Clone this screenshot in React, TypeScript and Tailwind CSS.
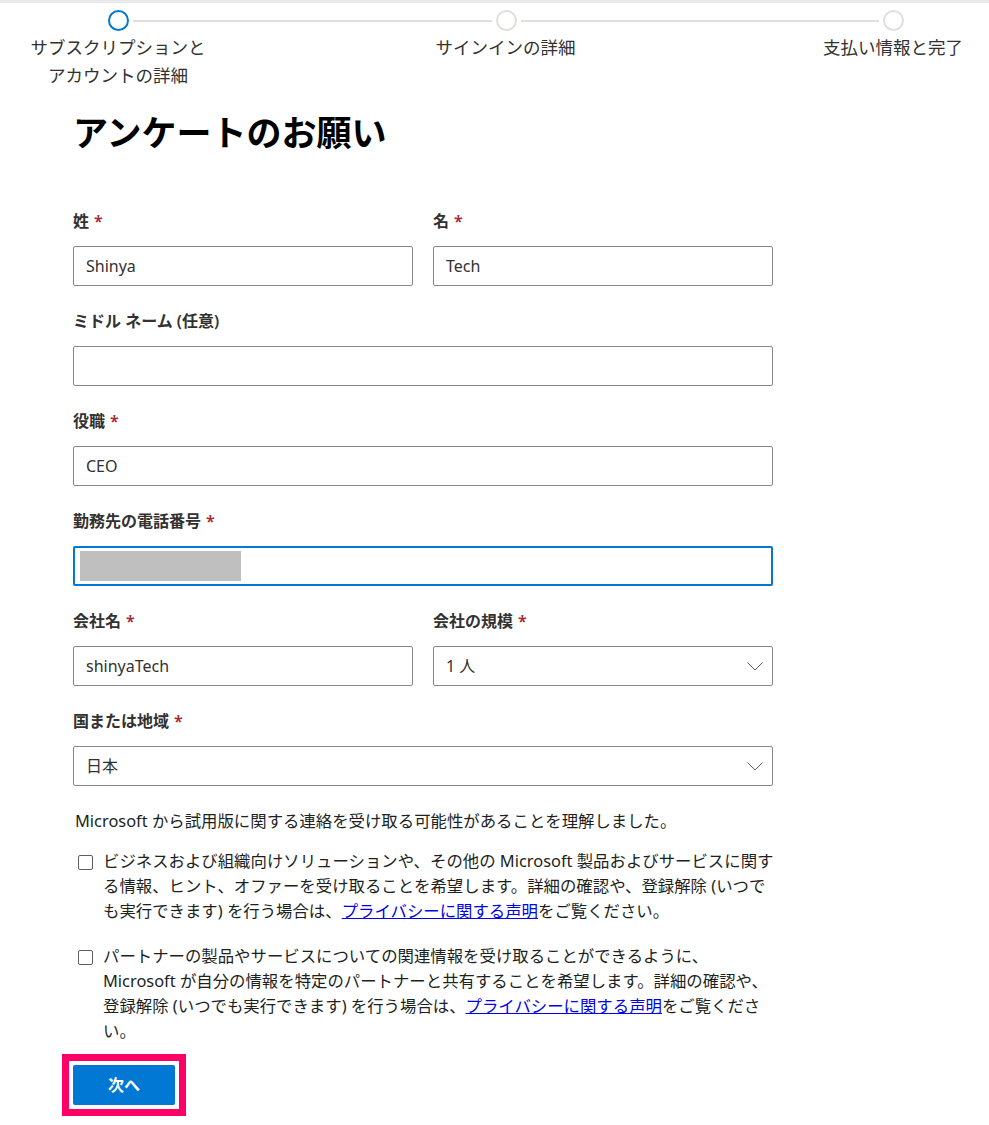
import React from "react";

const FONT = { fontFamily: '"Noto Sans", "Noto Sans CJK JP", sans-serif' };

function Label({ text, required = true }: { text: string; required?: boolean }) {
  return (
    <div className="h-[24px] leading-[24px] text-[16px] font-semibold text-[#323130] mb-[13px] whitespace-nowrap">
      {text}
      {required && <span className="text-[#a4262c] ml-[5px]">*</span>}
    </div>
  );
}

function TextInput({ value, focused = false, masked = false }: { value?: string; focused?: boolean; masked?: boolean }) {
  return (
    <div
      className={
        "h-[40px] w-full rounded-[2px] bg-white flex items-center " +
        (focused ? "border-2 border-[#0078d4] pl-[5px]" : "border border-[#8a8886] pl-[12px]")
      }
    >
      {masked ? (
        <div className="h-[30px] w-[161px] bg-[#bfbfbf]" />
      ) : (
        <span className="text-[16px] text-[#323130]">{value}</span>
      )}
    </div>
  );
}

function Chevron() {
  return (
    <svg width="16" height="9" viewBox="0 0 16 9" fill="none">
      <path d="M0.5 0.5 L8 8 L15.5 0.5" stroke="#605e5c" strokeWidth="1" />
    </svg>
  );
}

function SelectInput({ value }: { value: string }) {
  return (
    <div className="h-[40px] w-full rounded-[2px] border border-[#8a8886] bg-white flex items-center justify-between pl-[12px] pr-[9px]">
      <span className="text-[16px] text-[#323130]">{value}</span>
      <Chevron />
    </div>
  );
}

function Field({ label, required = true, children }: { label: string; required?: boolean; children: React.ReactNode }) {
  return (
    <div className="flex flex-col">
      <Label text={label} required={required} />
      {children}
    </div>
  );
}

function Circle({ active = false }: { active?: boolean }) {
  return (
    <div
      className={
        "w-[21px] h-[21px] rounded-full border-2 bg-white shrink-0 " +
        (active ? "border-[#0078d4]" : "border-[#e1dfdd]")
      }
    />
  );
}

function Line() {
  return <div className="flex-1 h-[2px] bg-[#e1dfdd] mx-[4px]" />;
}

function CheckRow({ lines }: { lines: React.ReactNode[] }) {
  return (
    <div className="flex items-start">
      <div className="w-[30px] shrink-0 pl-[5px] pt-[7px]">
        <div className="w-[15px] h-[15px] rounded-[2px] border border-[#605e5c] bg-white" />
      </div>
      <div className="text-[16.4px] leading-[25px] text-[#201f1e]">
        {lines.map((l, i) => (
          <span key={i} className="block whitespace-nowrap">
            {l}
          </span>
        ))}
      </div>
    </div>
  );
}

const Link = () => <a className="text-[#0000ee] underline">プライバシーに関する声明</a>;

export default function App() {
  return (
    <div className="w-[989px] min-h-[1125px] bg-white" style={FONT}>
      <div className="h-[3px] bg-[#ebebeb]" />
      {/* Stepper */}
      <div className="flex items-center pl-[108px] pr-[85px] mt-[7px]">
        <Circle active />
        <Line />
        <Circle />
        <Line />
        <Circle />
      </div>
      <div className="flex justify-between pl-[28px] pr-[6px] mt-[2px] text-[17.5px] leading-[28px] text-[#323130]">
        <div className="w-[180px] text-center">
          サブスクリプションと
          <br />
          アカウントの詳細
        </div>
        <div className="w-[180px] text-center">サインインの詳細</div>
        <div className="w-[180px] text-center">支払い情報と完了</div>
      </div>

      {/* Form */}
      <div className="pl-[73px] w-[773px]">
        <h1 className="mt-[22px] text-[35px] leading-[44px] font-bold text-black">アンケートのお願い</h1>

        <div className="mt-[54px] flex flex-col gap-[23px]">
          <div className="grid grid-cols-2 gap-x-[20px]">
            <Field label="姓">
              <TextInput value="Shinya" />
            </Field>
            <Field label="名">
              <TextInput value="Tech" />
            </Field>
          </div>
          <Field label="ミドル ネーム (任意)" required={false}>
            <TextInput value="" />
          </Field>
          <Field label="役職">
            <TextInput value="CEO" />
          </Field>
          <Field label="勤務先の電話番号">
            <TextInput focused masked />
          </Field>
          <div className="grid grid-cols-2 gap-x-[20px]">
            <Field label="会社名">
              <TextInput value="shinyaTech" />
            </Field>
            <Field label="会社の規模">
              <SelectInput value="1 人" />
            </Field>
          </div>
          <Field label="国または地域">
            <SelectInput value="日本" />
          </Field>
        </div>

        <p className="mt-[22px] ml-[2px] text-[16.4px] leading-[25px] text-[#201f1e] whitespace-nowrap">
          Microsoft から試用版に関する連絡を受け取る可能性があることを理解しました。
        </p>

        <div className="mt-[15px]">
          <CheckRow
            lines={[
              "ビジネスおよび組織向けソリューションや、その他の Microsoft 製品およびサービスに関す",
              "る情報、ヒント、オファーを受け取ることを希望します。詳細の確認や、登録解除 (いつで",
              <>
                も実行できます) を行う場合は、<Link />をご覧ください。
              </>,
            ]}
          />
        </div>
        <div className="mt-[20px]">
          <CheckRow
            lines={[
              "パートナーの製品やサービスについての関連情報を受け取ることができるように、",
              "Microsoft が自分の情報を特定のパートナーと共有することを希望します。詳細の確認や、",
              <>
                登録解除 (いつでも実行できます) を行う場合は、<Link />をご覧くださ
              </>,
              "い。",
            ]}
          />
        </div>

        <div className="mt-[11px] -ml-[11px] inline-block border-[7px] border-[#fe0066] p-[4px]">
          <button className="w-[102px] h-[40px] rounded-[2px] bg-[#0078d4] text-white text-[16px] font-bold flex items-center justify-center">
            次へ
          </button>
        </div>
      </div>
    </div>
  );
}
